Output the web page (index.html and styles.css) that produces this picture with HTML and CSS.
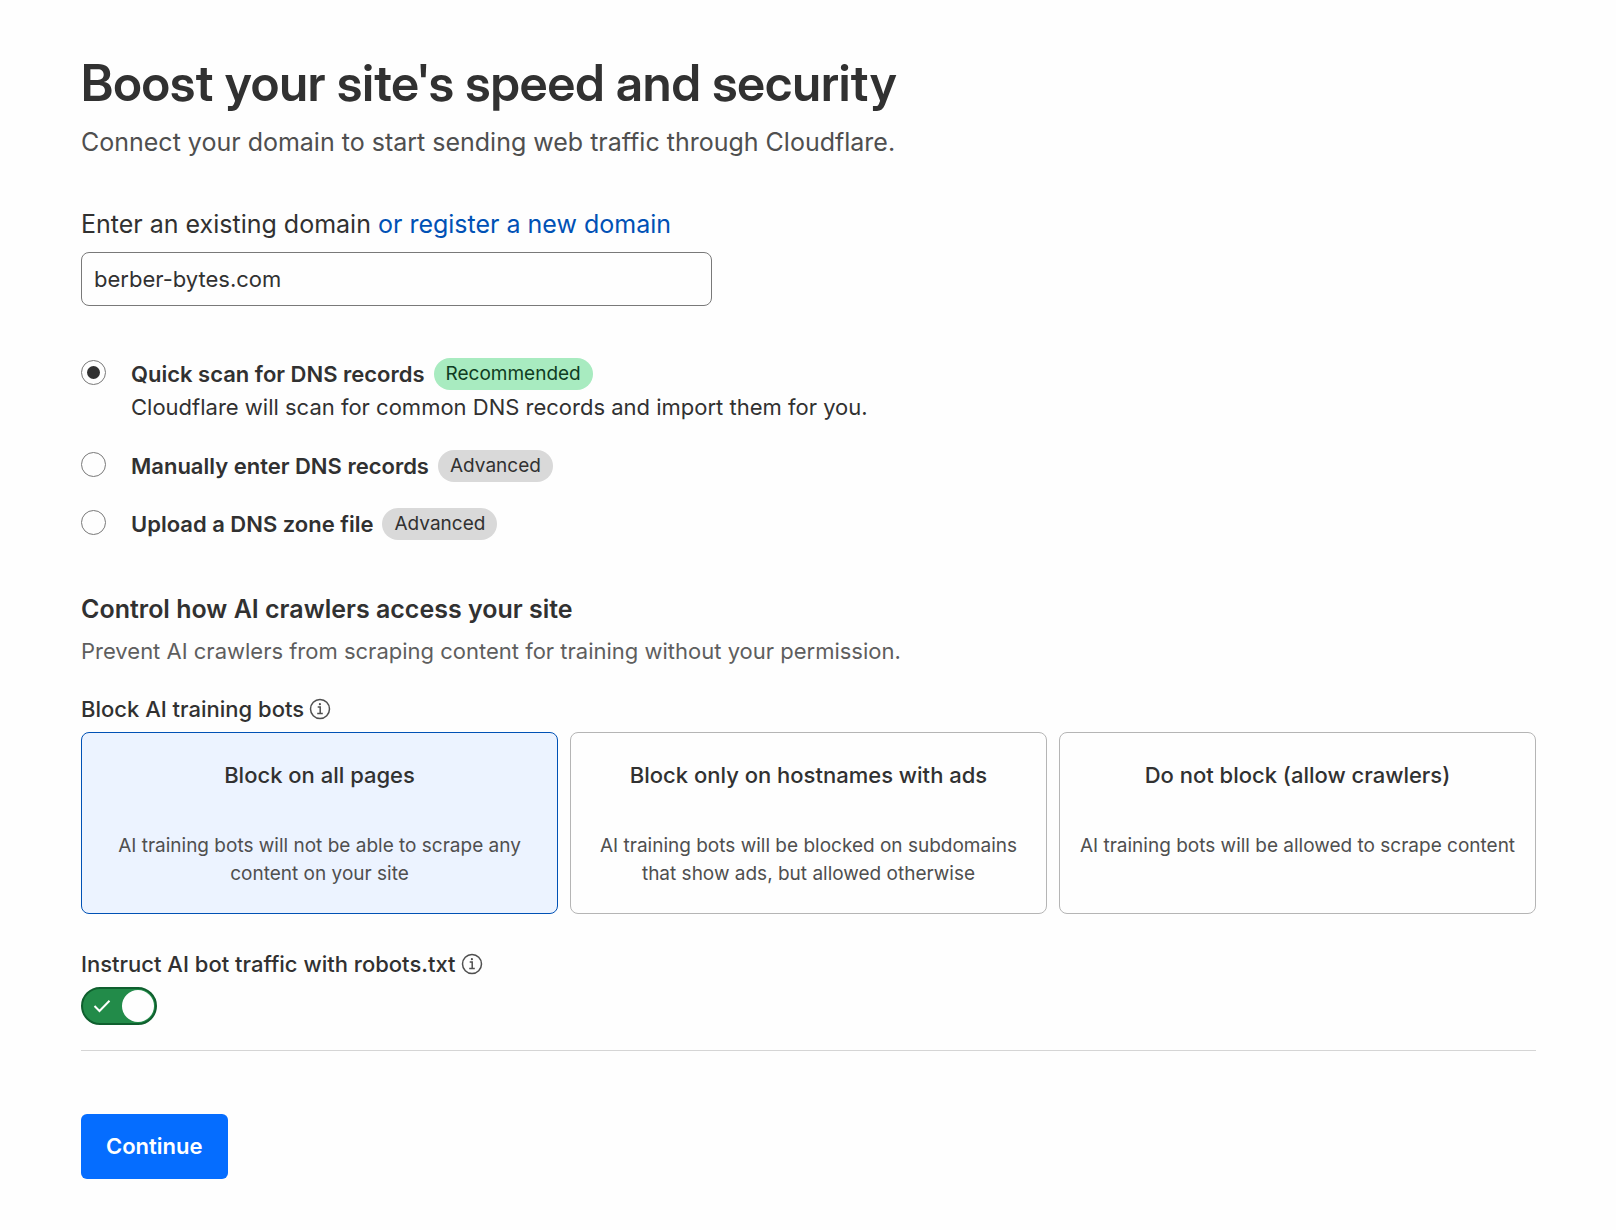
FILE: index.html
```html
<!DOCTYPE html>
<html lang="en">
<head>
    <meta charset="UTF-8">
    <meta name="viewport" content="width=device-width, initial-scale=1.0">
    <title>Connect your domain</title>
    <link rel="stylesheet" href="styles.css">
</head>
<body>
    <main class="page">
        <header>
            <h1>Boost your site's speed and security</h1>
            <p class="subtitle">Connect your domain to start sending web traffic through Cloudflare.</p>
        </header>

        <form class="form">
            <div class="domain">
                <div class="domain-label">
                    <label for="domain">Enter an existing domain</label>
                    <a href="#register">or register a new domain</a>
                </div>
                <input class="domain-input" type="text" id="domain" name="domain" value="berber-bytes.com">
            </div>

            <div class="scan-options">
                <div class="scan-option">
                    <input class="radio" type="radio" id="scan-quick" name="scan" value="quick" checked>
                    <div>
                        <div class="scan-title">
                            <label for="scan-quick">Quick scan for DNS records</label>
                            <span class="badge badge-green">Recommended</span>
                        </div>
                        <p class="scan-text">Cloudflare will scan for common DNS records and import them for you.</p>
                    </div>
                </div>
                <div class="scan-option">
                    <input class="radio" type="radio" id="scan-manual" name="scan" value="manual">
                    <div class="scan-title">
                        <label for="scan-manual">Manually enter DNS records</label>
                        <span class="badge">Advanced</span>
                    </div>
                </div>
                <div class="scan-option">
                    <input class="radio" type="radio" id="scan-upload" name="scan" value="upload">
                    <div class="scan-title">
                        <label for="scan-upload">Upload a DNS zone file</label>
                        <span class="badge">Advanced</span>
                    </div>
                </div>
            </div>

            <section class="crawlers">
                <h2>Control how AI crawlers access your site</h2>
                <p class="crawlers-text">Prevent AI crawlers from scraping content for training without your permission.</p>

                <div class="field-label">
                    <span id="bots-label">Block AI training bots</span>
                    <button class="info" type="button" aria-label="About blocking AI training bots">
                        <svg viewBox="0 0 22 22" width="22" height="22" aria-hidden="true">
                            <circle cx="11" cy="11" r="9.5"/>
                            <path d="M8.7 9h2.5v6.3M8.2 15.4h5.6"/>
                            <circle class="dot" cx="10.9" cy="6.2" r="1.1"/>
                        </svg>
                    </button>
                </div>
                <div class="cards" role="radiogroup" aria-labelledby="bots-label">
                    <label class="card">
                        <input type="radio" name="bots" value="all" checked>
                        <span class="card-title">Block on all pages</span>
                        <span class="card-text">AI training bots will not be able to scrape any content on your site</span>
                    </label>
                    <label class="card">
                        <input type="radio" name="bots" value="ads">
                        <span class="card-title">Block only on hostnames with ads</span>
                        <span class="card-text">AI training bots will be blocked on subdomains that show ads, but allowed otherwise</span>
                    </label>
                    <label class="card">
                        <input type="radio" name="bots" value="none">
                        <span class="card-title">Do not block (allow crawlers)</span>
                        <span class="card-text">AI training bots will be allowed to scrape content</span>
                    </label>
                </div>
            </section>

            <section class="robots">
                <div class="field-label">
                    <label for="robots">Instruct AI bot traffic with robots.txt</label>
                    <button class="info" type="button" aria-label="About robots.txt">
                        <svg viewBox="0 0 22 22" width="22" height="22" aria-hidden="true">
                            <circle cx="11" cy="11" r="9.5"/>
                            <path d="M8.7 9h2.5v6.3M8.2 15.4h5.6"/>
                            <circle class="dot" cx="10.9" cy="6.2" r="1.1"/>
                        </svg>
                    </button>
                </div>
                <div class="toggle">
                    <input type="checkbox" role="switch" id="robots" name="robots" checked>
                    <svg class="toggle-check" viewBox="0 0 18 14" width="18" height="14" aria-hidden="true">
                        <path d="M1.5 7l5 5L16.5 1.8"/>
                    </svg>
                    <span class="toggle-knob"></span>
                </div>
            </section>

            <button class="continue" type="submit">Continue</button>
        </form>
    </main>
</body>
</html>
```
FILE: styles.css
```css
* {
    box-sizing: border-box;
}
body {
    font-family: Inter, "Liberation Sans", sans-serif;
    font-size: 22px;
    line-height: 34px;
    color: #313131;
    background-color: #fefefe;
    margin: 0;
}
h1, h2, p {
    margin: 0;
}
input, button {
    font-family: inherit;
    margin: 0;
}
.page {
    padding: 53px 80px 50px 81px;
}
h1 {
    font-family: "Inter Display", Inter, "Liberation Sans", sans-serif;
    font-size: 50px;
    line-height: 60px;
    font-weight: 600;
    font-variation-settings: "opsz" 32;
}
.subtitle {
    margin-top: 10px;
    font-size: 25px;
    line-height: 38px;
    color: #4f4f4f;
}
.form {
    margin-top: 44px;
}

/* domain */
.domain-label {
    font-size: 25px;
    line-height: 38px;
    margin-bottom: 9px;
}
.domain-label a {
    color: #0051b5;
    text-decoration: none;
}
.domain-input {
    display: block;
    width: 100%;
    max-width: 631px;
    height: 54px;
    padding: 0 12px;
    font-size: 22px;
    color: #313131;
    background-color: #fefefe;
    border: 1px solid #797979;
    border-radius: 8px;
}

/* dns scan options */
.scan-options {
    display: flex;
    flex-direction: column;
    gap: 26px;
    margin-top: 52px;
}
.scan-option {
    display: flex;
    align-items: flex-start;
    gap: 25px;
}
.radio {
    appearance: none;
    flex: none;
    display: grid;
    place-items: center;
    width: 25px;
    height: 25px;
    margin-top: 2px;
    border: 1px solid #797979;
    border-radius: 50%;
}
.radio:checked::before {
    content: "";
    width: 13px;
    height: 13px;
    border-radius: 50%;
    background-color: #313131;
}
.scan-title {
    display: flex;
    align-items: center;
    gap: 9px;
    line-height: 32px;
    font-weight: 600;
}
.badge {
    padding: 0 12px;
    border-radius: 16px;
    font-size: 19px;
    font-weight: 400;
    background-color: #d9d9d9;
}
.badge-green {
    color: #0f3d22;
    background-color: #a8ebc0;
}

/* ai crawlers */
.crawlers {
    margin-top: 50px;
}
h2 {
    font-size: 25px;
    line-height: 38px;
    font-weight: 600;
}
.crawlers-text {
    margin: 6px 0 24px;
    color: #5e5e5e;
}
.field-label {
    display: flex;
    align-items: center;
    gap: 5px;
    font-weight: 500;
}
.info {
    display: flex;
    padding: 0;
    border: none;
    background: none;
    cursor: pointer;
}
.info svg {
    fill: none;
    stroke: #4f4f4f;
    stroke-width: 1.5;
}
.info .dot {
    fill: #4f4f4f;
    stroke: none;
}
.cards {
    display: grid;
    grid-template-columns: repeat(3, 1fr);
    gap: 12px;
    margin-top: 6px;
}
.card {
    display: flex;
    flex-direction: column;
    gap: 40px;
    padding: 25px 16px;
    text-align: center;
    border: 1px solid #b5b5b5;
    border-radius: 8px;
    cursor: pointer;
}
.card input {
    appearance: none;
    position: absolute;
}
.card:has(input:checked) {
    background-color: #ecf3ff;
    border-color: #0051b5;
}
.card-title {
    font-weight: 500;
}
.card-text {
    font-size: 19px;
    line-height: 28px;
    color: #4f4f4f;
}

/* robots.txt switch */
.robots {
    margin-top: 33px;
    padding-bottom: 25px;
    border-bottom: 1px solid #d5d5d5;
}
.toggle {
    position: relative;
    width: 76px;
    height: 38px;
    margin-top: 6px;
}
.toggle input {
    appearance: none;
    display: block;
    width: 100%;
    height: 100%;
    border: 2px solid #0f5f2e;
    border-radius: 19px;
    background-color: #228b49;
    cursor: pointer;
}
.toggle-check {
    position: absolute;
    left: 12px;
    top: 12px;
    fill: none;
    stroke: #fff;
    stroke-width: 2;
    pointer-events: none;
}
.toggle-knob {
    position: absolute;
    right: 3px;
    top: 3px;
    width: 32px;
    height: 32px;
    border-radius: 50%;
    background-color: #fefefe;
    pointer-events: none;
}
.continue {
    margin-top: 63px;
    padding: 0 25px;
    font-size: 22px;
    line-height: 65px;
    font-weight: 600;
    color: #fff;
    background-color: #056dff;
    border: none;
    border-radius: 6px;
    cursor: pointer;
}
```
